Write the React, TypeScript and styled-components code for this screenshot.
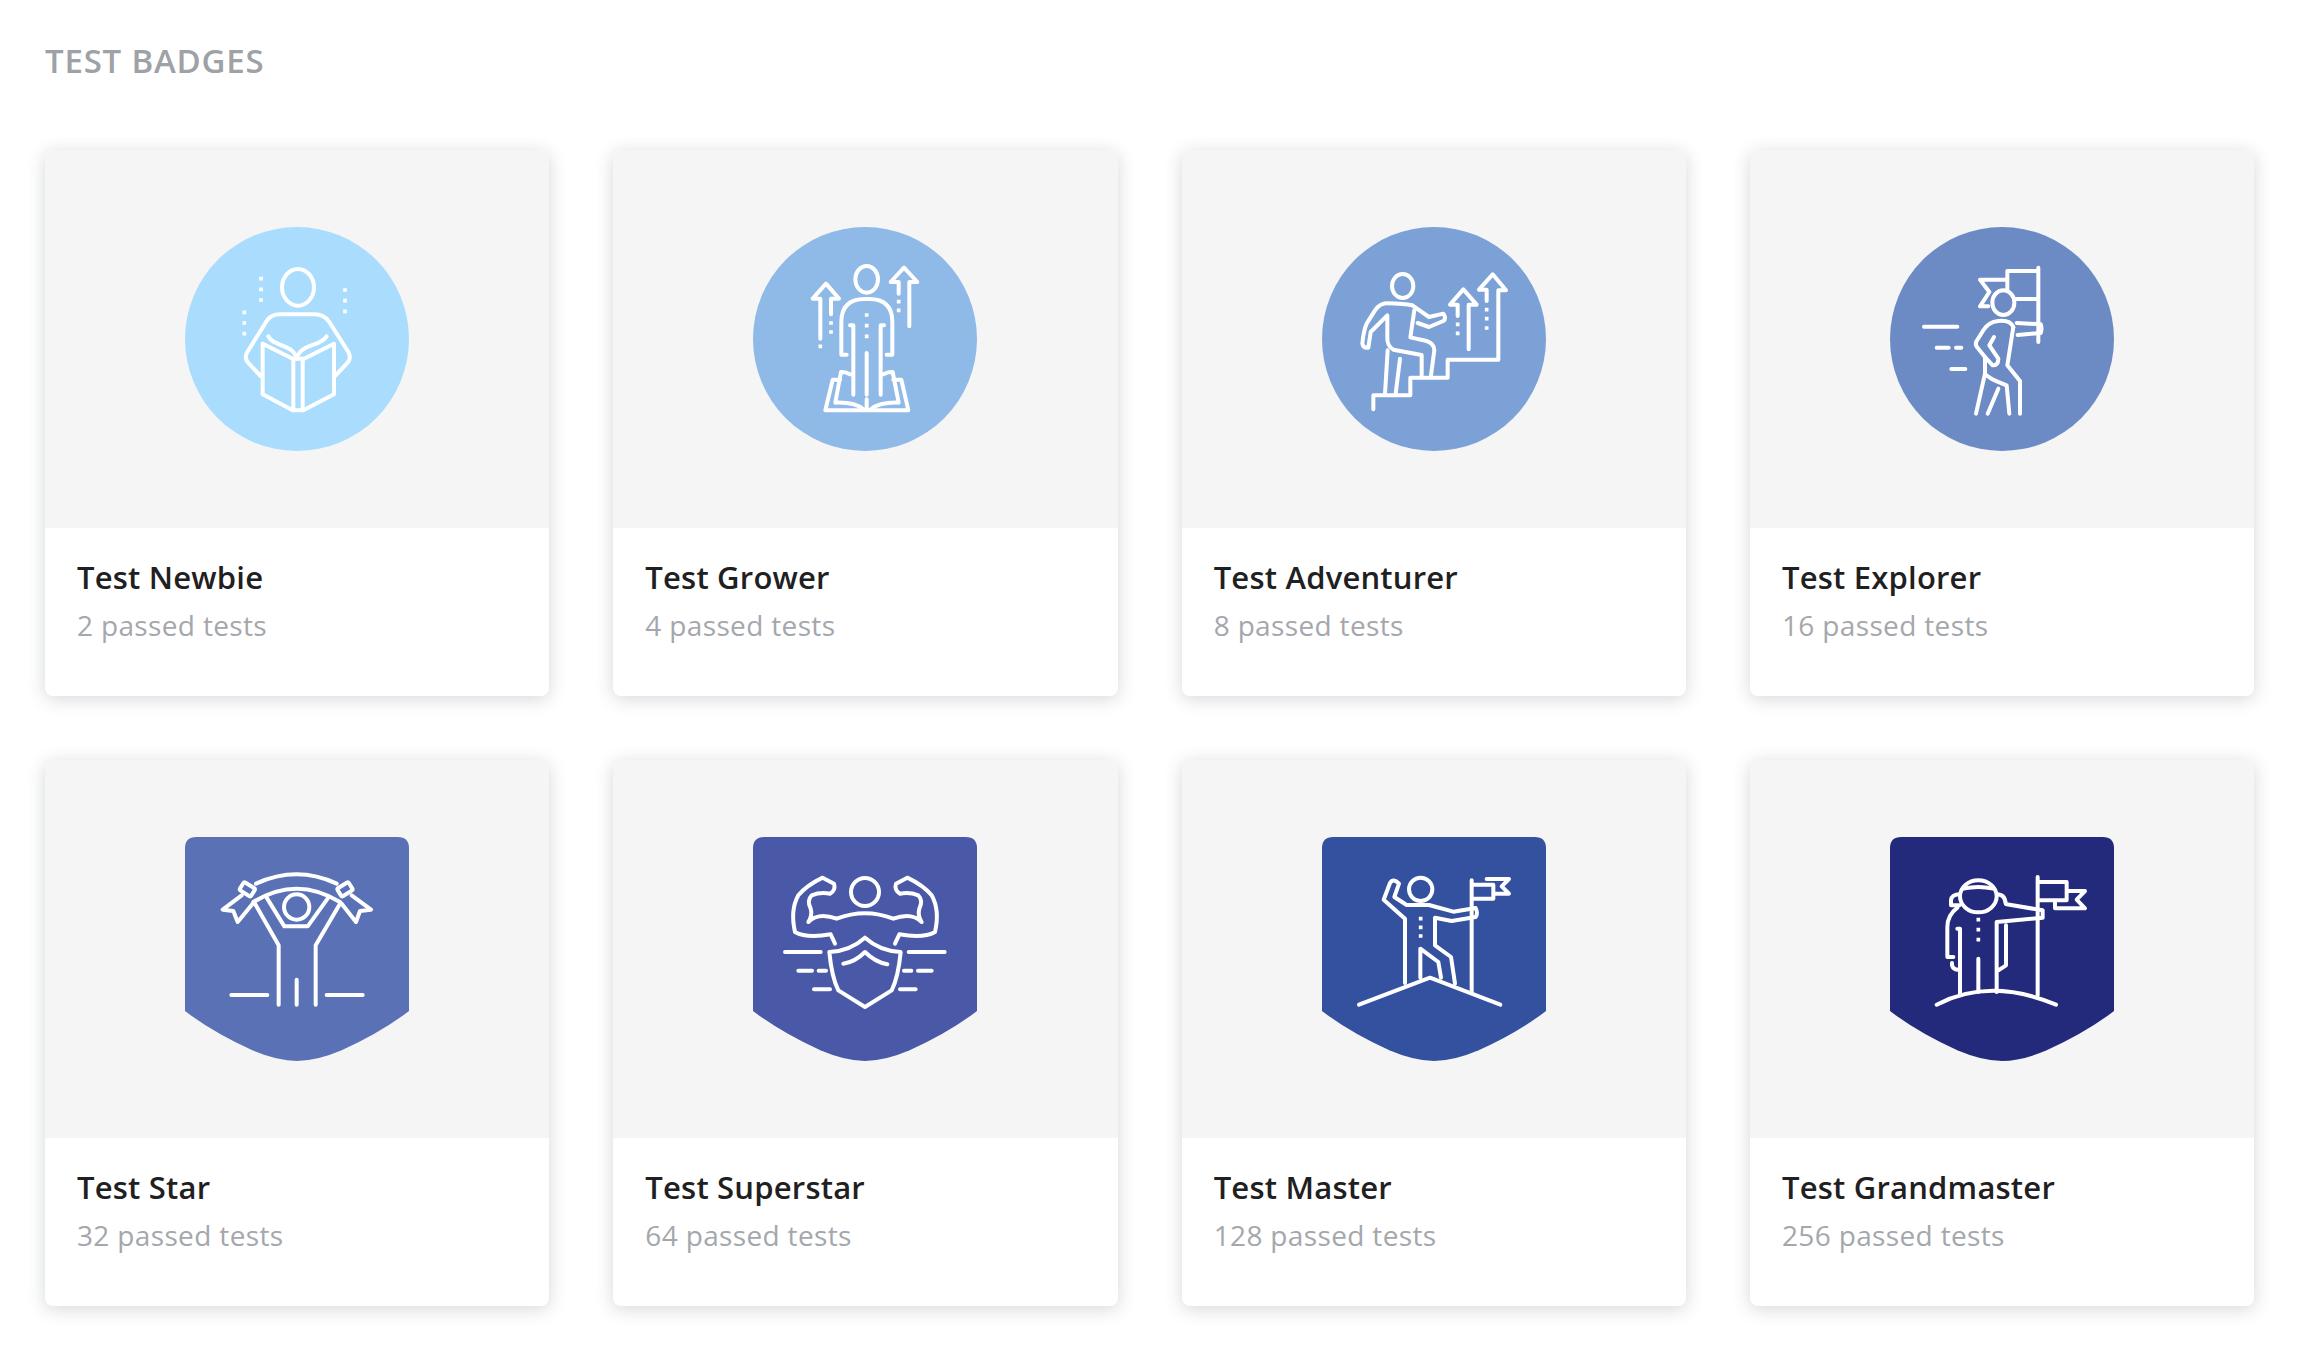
import React from "react";
import styled, { createGlobalStyle } from "styled-components";

const Global = createGlobalStyle`
  html, body { margin: 0; padding: 0; background: #fff; }
  body { font-family: "Open Sans", "Noto Sans", sans-serif; }
`;

const Page = styled.main`
  padding: 44px 45.7px 59px 45px;
`;

const Heading = styled.h1`
  margin: 0 0 72px;
  font-size: 33px;
  line-height: 34px;
  font-weight: 600;
  letter-spacing: 0.8px;
  color: #9ea1a6;
  text-transform: uppercase;
`;

const Grid = styled.div`
  display: grid;
  grid-template-columns: repeat(4, 1fr);
  gap: 64px;
`;

const Card = styled.article`
  border-radius: 8px;
  overflow: hidden;
  background: #fff;
  box-shadow: 0 3px 18px rgba(45, 55, 75, 0.2);
`;

const Art = styled.div`
  display: flex;
  align-items: center;
  justify-content: center;
  height: 378px;
  background: #f5f5f5;
`;

const Svg = styled.svg`
  display: block;
  width: 224px;
  height: 224px;
  fill: none;
  stroke: #fff;
  stroke-width: 12;
  stroke-linecap: round;
  stroke-linejoin: round;
`;

const Dots = styled.path`
  stroke-linecap: square;
  stroke-width: 11;
`;

const Body = styled.div`
  padding: 29px 32px 51px;
`;

const Title = styled.h2`
  margin: 0 0 8px;
  font-size: 31px;
  line-height: 40px;
  font-weight: 600;
  letter-spacing: 0.2px;
  color: #1f2022;
`;

const Sub = styled.p`
  margin: 0;
  font-size: 28px;
  line-height: 40px;
  font-weight: 400;
  letter-spacing: 0.35px;
  color: #a4a7ac;
`;

const dots = (pts: number[][]) => pts.map(([x, y]) => `M${x} ${y}h.01`).join("");

const circle = (off: number, fill: string) => (
  <circle cx={off + 336} cy={386} r={336} fill={fill} stroke="none" />
);

const shield = (off: number, fill: string) => (
  <path
    transform={`translate(${off} 50)`}
    fill={fill}
    stroke="none"
    d="M34 0H638Q672 0 672 34V522Q590 585 470 640 395 672 336 672 277 672 202 640 82 585 0 522V34Q0 0 34 0Z"
  />
);

type Badge = { name: string; sub: string; off: number; art: React.ReactNode };

const badges: Badge[] = [
  {
    name: "Test Newbie",
    sub: "2 passed tests",
    off: 45,
    art: (
      <>
        {circle(45, "#aaddfd")}
        <ellipse cx={384} cy={231} rx={48} ry={55} />
        <Dots d={dots([[273, 205], [273, 237], [273, 269], [223, 306], [223, 338], [223, 370], [525, 239], [525, 271], [525, 303]])} />
        <path d="M272 497L234 457Q222 443 232 425L290 332Q303 312 330 312H435Q462 312 478 335L535 425Q545 443 533 457L495 497" />
        <path d="M278 400V552L368 600H400L492 552V400L402 445H368Z" />
        <path d="M370 445V600M398 445V600" />
        <path d="M295 378C310 410 370 400 380 445C390 400 450 410 470 378" />
      </>
    ),
  },
  {
    name: "Test Grower",
    sub: "4 passed tests",
    off: 39,
    art: (
      <>
        {circle(39, "#8fb9e6")}
        <ellipse cx={380} cy={207} rx={34} ry={40} />
        <path d="M320 433H304V335Q304 266 375 266H388Q457 266 457 335V433H440" />
        <path d="M330 345H340V553M432 345H422V553M380 428V553" />
        <Dots d={dots([[380, 314], [380, 346], [380, 378], [273, 338], [273, 365], [241, 408], [476, 274], [476, 300]])} />
        <path d="M241 385V265H218L258 220L297 265H273V312" />
        <path d="M508 348V215H532L492 172L452 215H476V250" />
        <path d="M300 508H278L256 600H505L484 508H460" />
        <path d="M330 492Q315 483 303 485L286 577Q345 575 370 597M430 492Q445 483 458 485L476 577Q420 575 392 597M380 567V597" />
      </>
    ),
  },
  {
    name: "Test Adventurer",
    sub: "8 passed tests",
    off: 51,
    art: (
      <>
        {circle(51, "#7ca1d6")}
        <ellipse cx={293} cy={227} rx={32} ry={36} />
        <path d="M322 285Q300 280 245 279Q225 279 210 300L185 340Q176 360 172 400Q175 415 190 412L197 365L247 315V380Q245 405 265 418L350 434V495" />
        <path d="M322 285L372 320L415 310Q425 325 415 332L372 350L338 338" />
        <path d="M328 300L316 381L365 392Q388 400 388 420L378 495" />
        <path d="M248 420L240 550M285 445L272 550" />
        <path d="M205 597V555H316V502H428V448H580V240H603L563 192L522 238H545V272" />
        <path d="M491 417V283H515L475 237L435 283H458V317" />
        <Dots d={dots([[545, 298], [545, 325], [545, 353], [458, 342], [458, 369]])} />
      </>
    ),
  },
  {
    name: "Test Explorer",
    sub: "16 passed tests",
    off: 60,
    art: (
      <>
        {circle(60, "#6c8bc5")}
        <path d="M505 172V395M505 182H412V240M412 208H330L358 245L330 288H355M432 266H505" />
        <ellipse cx={400} cy={277} rx={33} ry={37} />
        <path d="M440 338L512 342Q517 355 512 368L443 374" />
        <path d="M430 350Q420 328 385 332Q355 335 340 360L318 395Q315 405 325 415L345 440V490" />
        <path d="M430 350L412 465L450 512V610" />
        <path d="M372 380L358 405L385 445Q385 465 368 465L345 440" />
        <path d="M345 490L318 610M345 490Q355 505 410 525L418 610M385 535L353 610" />
        <path d="M162 349H262M200 412H236M258 412H274M244 476H286" />
      </>
    ),
  },
  {
    name: "Test Star",
    sub: "32 passed tests",
    off: 45,
    art: (
      <>
        {shield(45, "#5a72b5")}
        <path d="M258 190Q380 134 500 190M250 245Q380 165 510 245" />
        <rect x={212} y={193} width={40} height={28} rx={5} transform="rotate(32 232 207)" />
        <rect x={505} y={193} width={40} height={28} rx={5} transform="rotate(-32 525 207)" />
        <path d="M215 225L158 268L190 272L203 305L248 250M545 225L603 268L570 272L558 305L515 250" />
        <path d="M255 250L326 375V553M510 250L437 375V553M290 232L343 318H413L475 232" />
        <circle cx={380} cy={260} r={38} />
        <path d="M380 478V553M184 524H292M470 524H578" />
      </>
    ),
  },
  {
    name: "Test Superstar",
    sub: "64 passed tests",
    off: 39,
    art: (
      <>
        {shield(39, "#4a59a7")}
        <circle cx={375} cy={215} r={42} />
        <path d="M285 370L272 342Q200 355 165 335Q150 270 175 225Q200 195 248 172L282 190Q288 210 270 220Q240 215 215 225Q200 240 212 265Q218 285 205 305Q235 275 290 295Q375 262 460 295Q515 275 545 305Q532 285 538 265Q550 240 535 225Q510 215 480 220Q462 210 468 190L502 172Q550 195 575 225Q600 270 585 335Q550 355 478 342L465 370" />
        <path d="M375 352Q330 392 268 395Q275 470 295 510L375 560L455 510Q475 470 482 395Q420 392 375 352Z" />
        <path d="M310 430Q345 425 375 395Q405 425 442 432" />
        <path d="M135 395H242M506 395H614M175 451H216M236 451H258M492 451H514M534 451H575M222 507H270M480 507H527" />
      </>
    ),
  },
  {
    name: "Test Master",
    sub: "128 passed tests",
    off: 51,
    art: (
      <>
        {shield(51, "#33519f")}
        <circle cx={347} cy={207} r={35} />
        <path d="M300 488V295L236 238L255 188Q265 172 282 190L268 230L305 254H372L445 274L512 263Q520 280 512 290L440 302L390 292V375L438 410L450 490" />
        <path d="M346 472V385L400 425L408 472" />
        <Dots d={dots([[347, 295], [347, 321], [347, 347]])} />
        <path d="M500 180V518M503 193H565V235H503M545 176H612L590 198L612 220H568" />
        <path d="M162 553L375 472L586 553" />
      </>
    ),
  },
  {
    name: "Test Grandmaster",
    sub: "256 passed tests",
    off: 60,
    art: (
      <>
        {shield(60, "#232a7c")}
        <ellipse cx={325} cy={228} rx={55} ry={48} />
        <path d="M280 205Q325 195 370 205" />
        <path d="M270 222Q245 222 243 240V255H268M380 222Q405 222 407 250" />
        <path d="M262 262Q232 285 232 320V410H250M246 428V435Q250 448 265 448M262 325H270V520M325 415V515M380 515V305L518 292V270L410 252M408 315V435L385 450" />
        <path d="M503 170V525M510 185H590V240H510M590 212H645L620 238L645 264H555V240" />
        <Dots d={dots([[325, 298], [325, 328], [325, 358]])} />
        <path d="M200 553Q360 470 558 553" />
      </>
    ),
  },
];

export default function App() {
  return (
    <Page>
      <Global />
      <Heading>Test badges</Heading>
      <Grid>
        {badges.map((b) => (
          <Card key={b.name}>
            <Art>
              <Svg viewBox={`${b.off} 50 672 672`} aria-hidden="true">
                {b.art}
              </Svg>
            </Art>
            <Body>
              <Title>{b.name}</Title>
              <Sub>{b.sub}</Sub>
            </Body>
          </Card>
        ))}
      </Grid>
    </Page>
  );
}
